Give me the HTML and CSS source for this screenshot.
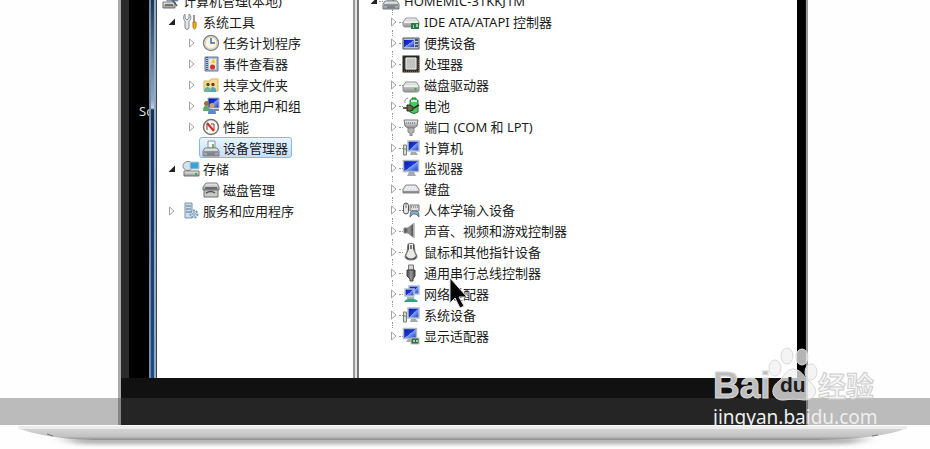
FILE: index.html
```html
<!DOCTYPE html>
<html lang="zh-CN">
<head>
<meta charset="utf-8">
<title>设备管理器</title>
<link rel="stylesheet" href="styles.css">
</head>
<body>
<svg class="sprite" aria-hidden="true">
  <defs>
    <linearGradient id="metal" x2="0" y2="1"><stop stop-color="#f4f4f4"/><stop offset="1" stop-color="#8d9194"/></linearGradient>
    <linearGradient id="blue" x2="1" y2="1"><stop stop-color="#0716a8"/><stop offset=".5" stop-color="#1c38d4"/><stop offset=".52" stop-color="#7fa0f4"/><stop offset="1" stop-color="#1530c8"/></linearGradient>
    <linearGradient id="dark" x2="1"><stop stop-color="#444"/><stop offset=".5" stop-color="#999"/><stop offset="1" stop-color="#444"/></linearGradient>
  </defs>
  <symbol id="closed" viewBox="0 0 8 10"><path d="M1.5 1v8L6 5z" fill="#fff" stroke="#a3a3a3"/></symbol>
  <symbol id="open" viewBox="0 0 8 10"><path d="M7 1.5v6.500H.5z" fill="#222"/></symbol>
  <symbol id="manage" viewBox="0 0 18 18"><path d="M5 1h11v8H5z" fill="url(#blue)" stroke="#9aa4ae"/><path d="M1 10h12v6H1z" fill="url(#metal)" stroke="#777"/><path d="M3 13h8M9 6l6 8" stroke="#555" stroke-width="1.500"/></symbol>
  <symbol id="tools" viewBox="0 0 18 18"><path d="M3 1v4l2 2 2-2V1c3 2 2 6 0 7v7q-2 3-4 0V8C1 6 1 3 3 1z" fill="#e5e8ea" stroke="#858b90"/><path d="M12 2v7" stroke="#777" stroke-width="1.500"/><path d="M11 9h3v5q-1.500 4-3 0z" fill="#f2b21d" stroke="#b8790b"/></symbol>
  <symbol id="clock" viewBox="0 0 18 18"><circle cx="9" cy="9" r="7.500" fill="#fbf4df" stroke="#8a8786" stroke-width="1.500"/><circle cx="9" cy="9" r="6" fill="none" stroke="#d2cec6"/><path d="M9 4v5h4" fill="none" stroke="#4169a8" stroke-width="1.500"/></symbol>
  <symbol id="events" viewBox="0 0 18 18"><path d="M3 2h13v14H3z" fill="#a9c1dc" stroke="#64758b"/><path d="M5 2v14" stroke="#4c5c78" stroke-width="2" stroke-dasharray="1 1"/><path d="M7 4h7v10H7z" fill="#f1ead0"/><path d="M12 3l-3 5h4z" fill="#f5c724"/><circle cx="10.500" cy="12" r="2.500" fill="#d62f25"/></symbol>
  <symbol id="folder" viewBox="0 0 18 18"><path d="M2 5h6l1-2h7v12H2z" fill="#f6dc92" stroke="#d9b25c"/><circle cx="6" cy="8.500" r="1.700" fill="#58472f"/><circle cx="11" cy="8.500" r="1.700" fill="#58472f"/><path d="M2 16q0-5 4-5 3 1 2 5z" fill="#65b6a1"/><path d="M8 16q0-5 3-5 4 1 3 5z" fill="#5aa5be"/></symbol>
  <symbol id="users" viewBox="0 0 18 18"><path d="M6 1h11v10H6z" fill="url(#blue)" stroke="#a9b2bc"/><path d="M12 13h5" stroke="#888" stroke-width="2"/><circle cx="4.500" cy="6.500" r="2.500" fill="#907149"/><circle cx="10" cy="8.500" r="2.500" fill="#d0a172"/><path d="M1 14q0-6 4-5 3 1 3 5z" fill="#5fa96a"/><path d="M6 17q0-6 4-5 4 0 4 5z" fill="#5c89c5"/></symbol>
  <symbol id="perf" viewBox="0 0 18 18"><circle cx="9" cy="9" r="7.500" fill="#f8f8f3" stroke="#77736f" stroke-width="1.500"/><path d="M5 12V6M12 12V6h-3" fill="none" stroke="#7b413c"/><path d="M5 5l7 8" stroke="#d42a22" stroke-width="2"/></symbol>
  <symbol id="device" viewBox="0 0 18 18"><path d="M6 2h7v7H6z" fill="#f8faf7" stroke="#8b9594"/><path d="M11 5v5" stroke="#4a9a4f" stroke-width="1.500"/><path d="M3 9h12l2 3v5H1v-5z" fill="url(#metal)" stroke="#767d84"/><path d="M2 13h14M5 15h8" stroke="#565e65"/></symbol>
  <symbol id="storage" viewBox="0 0 18 18"><ellipse cx="6" cy="6" rx="5" ry="4.500" fill="#d9e2e8" stroke="#7f8c93"/><path d="M8 2h9v7H8z" fill="#38a4d8" stroke="#c3ccd2"/><path d="M2 11h15v5H2z" fill="url(#metal)" stroke="#757575"/><circle cx="14" cy="14" r="1.200" fill="#31b834"/></symbol>
  <symbol id="diskman" viewBox="0 0 18 18"><path d="M4 2h11l2 4v3H1V6z" fill="url(#metal)" stroke="#7b7b7b"/><path d="M2 9h14v7H2z" fill="#c7c9c9" stroke="#6f6f6f"/><path d="M3 7h12M4 12q5-3 9 0" fill="none" stroke="#555" stroke-width="1.500"/></symbol>
  <symbol id="services" viewBox="0 0 18 18"><path d="M3 1h7v15H3z" fill="#c9dcea" stroke="#8194a3"/><path d="M4 4h5M4 7h5M4 10h5" stroke="#587990"/><circle cx="12" cy="12" r="3.500" fill="#d4e4f0" stroke="#779bb8" stroke-width="2" stroke-dasharray="2 1"/><circle cx="12" cy="12" r="1.300" fill="#fff" stroke="#7794aa"/></symbol>
  <symbol id="ide" viewBox="0 0 18 18"><path d="M4 5h10l3 4v3q0 2-2 2H3q-2 0-2-2V9z" fill="url(#metal)" stroke="#999"/><path d="M2 9h14" stroke="#eee" stroke-width="2"/><path d="M9 10h8v6H9z" fill="#287a4c"/><path d="M11 12h1v3h-1zM14 11h2v3h-2z" fill="#9ccba2"/></symbol>
  <symbol id="portable" viewBox="0 0 18 18"><path d="M1 4h16v11H1z" fill="#b9bfcc" stroke="#505568"/><path d="M2 6h10v7H2z" fill="url(#blue)"/><path d="M13 6h3M13 9h3M13 12h3" stroke="#27335a" stroke-width="1.500"/></symbol>
  <symbol id="cpu" viewBox="0 0 18 18"><path d="M1.500 1.500h15v15h-15z" fill="#494949" stroke="#292522" stroke-width="2"/><path d="M4 3h10v11H4z" fill="#c2c2c0" stroke="#eee"/><path d="M2 17h15V4" fill="none" stroke="#b59450" stroke-dasharray="1 1"/></symbol>
  <symbol id="disk" viewBox="0 0 18 18"><path d="M4 6h10l3 4v4q0 2-2 2H3q-2 0-2-2v-4z" fill="url(#metal)" stroke="#8c8c8c"/><path d="M2 10h14" stroke="#eee" stroke-width="2"/><circle cx="13.500" cy="13" r="1.200" fill="#4aa736"/></symbol>
  <symbol id="battery" viewBox="0 0 18 18"><path d="M8 3h2V1h4v2h2v12q-4 3-8 0z" fill="#43cb5b" stroke="#28713a"/><path d="M9 4h6" stroke="#d8e7db" stroke-width="2"/><path d="M3 6q-1-4 3-5" fill="none" stroke="#8791a2"/><path d="M1 11h4M9 11h3l5-3" fill="none" stroke="#292b22" stroke-width="1.500"/><path d="M5 8h3l3 2v3l-3 1H5z" fill="#6b6648" stroke="#292b22"/></symbol>
  <symbol id="port" viewBox="0 0 18 18"><path d="M2 2h14l-1 6-3 2H6L3 8z" fill="url(#metal)" stroke="#777"/><path d="M4 5h10" stroke="#555" stroke-dasharray="1 1"/><path d="M6 10h6v4l-2 1v3H8v-3l-2-1z" fill="#b1b5b7" stroke="#858585"/></symbol>
  <symbol id="computer" viewBox="0 0 18 18"><path d="M1.500 6h3v10h-3z" fill="#dadad0" stroke="#7c7f7b"/><path d="M2 10h2" stroke="#39a945"/><path d="M6 2h11v10H6z" fill="url(#blue)" stroke="#b4bdca" stroke-width="1.500"/><path d="M9 13h5l2 3H8z" fill="#a4a9ad"/></symbol>
  <symbol id="monitor" viewBox="0 0 18 18"><path d="M1.500 1.500h15v11h-15z" fill="url(#blue)" stroke="#acb4c1" stroke-width="1.500"/><path d="M7 13h5l2 4H5z" fill="#a0a8b0"/></symbol>
  <symbol id="keyboard" viewBox="0 0 18 18"><path d="M4 5h10l3 4v4H1V9z" fill="#dcdee2" stroke="#888"/><path d="M4 7h10M3 9h12" stroke="#fff" stroke-dasharray="2 1"/><path d="M1 12h16" stroke="#767b87" stroke-width="1.500"/></symbol>
  <symbol id="hid" viewBox="0 0 18 18"><rect x="1.500" y="2" width="5" height="11" rx="2.500" fill="#e5e5e3" stroke="#555"/><path d="M4 2v5M8 4h9v6H8z" fill="#ddd" stroke="#777"/><path d="M9 6h7" stroke="#555" stroke-dasharray="1 1"/><path d="M8 16q0-6 2-6h5q2 0 2 6l-3-3h-3z" fill="#86b0c8" stroke="#59717e"/></symbol>
  <symbol id="sound" viewBox="0 0 18 18"><path d="M2 6h4l6-5v15l-6-5H2z" fill="url(#dark)" stroke="#888"/><path d="M12 1v15" stroke="#c3c3c3" stroke-width="1.500"/></symbol>
  <symbol id="mouse" viewBox="0 0 18 18"><path d="M6 1q3-1 6 0l1 8 2 4q0 4-6 4t-6-4l2-4z" fill="#4f4f4f" stroke="#777"/><path d="M7 1h4v5l3 7q-5 5-10 0l3-7z" fill="#e9e9e7"/><path d="M9 2v4" stroke="#555" stroke-width="1.500"/></symbol>
  <symbol id="usb" viewBox="0 0 18 18"><path d="M6.500 1h5v5h-5z" fill="#d4d4d4" stroke="#777"/><path d="M5 6h8v6l-2 3v2H8v-2l-3-3z" fill="url(#dark)" stroke="#444"/></symbol>
  <symbol id="network" viewBox="0 0 18 18"><path d="M7 1h10v8H7z" fill="url(#blue)" stroke="#b0bfd6" stroke-width="1.500"/><path d="M3 4h9v7H3z" fill="url(#blue)" stroke="#b0bfd6" stroke-width="1.500"/><path d="M5 13h7" stroke="#9cb4b0" stroke-width="2"/><path d="M2 17q1-3 5-3h4q4 0 5 3z" fill="#33a57a"/></symbol>
  <symbol id="display" viewBox="0 0 18 18"><path d="M1.500 1.500h13v10h-13z" fill="url(#blue)" stroke="#b0b9c4" stroke-width="1.500"/><path d="M6 12h5l1 3H4z" fill="#aaa"/><path d="M9 11h8v6H9z" fill="#326b4c" stroke="#bac7ba"/><path d="M11 13h2v2h-2zM14 13h2v2h-2z" fill="#a8d1a2"/></symbol>
</svg>

<main class="laptop">
  <div class="lid">
    <div class="screen">
      <div class="desktop">Sc</div>
      <section class="window">
        <ul class="tree nav">
          <li><svg class="arrow"></svg><svg class="icon"><use href="#manage"/></svg><span>计算机管理(本地)</span></li>
          <li class="l1"><svg class="arrow"><use href="#open"/></svg><svg class="icon"><use href="#tools"/></svg><span>系统工具</span></li>
          <li class="l2"><svg class="arrow"><use href="#closed"/></svg><svg class="icon"><use href="#clock"/></svg><span>任务计划程序</span></li>
          <li class="l2"><svg class="arrow"><use href="#closed"/></svg><svg class="icon"><use href="#events"/></svg><span>事件查看器</span></li>
          <li class="l2"><svg class="arrow"><use href="#closed"/></svg><svg class="icon"><use href="#folder"/></svg><span>共享文件夹</span></li>
          <li class="l2"><svg class="arrow"><use href="#closed"/></svg><svg class="icon"><use href="#users"/></svg><span>本地用户和组</span></li>
          <li class="l2"><svg class="arrow"><use href="#closed"/></svg><svg class="icon"><use href="#perf"/></svg><span>性能</span></li>
          <li class="l2 selected"><svg class="icon"><use href="#device"/></svg><span>设备管理器</span></li>
          <li class="l1"><svg class="arrow"><use href="#open"/></svg><svg class="icon"><use href="#storage"/></svg><span>存储</span></li>
          <li class="l2"><svg class="arrow"></svg><svg class="icon"><use href="#diskman"/></svg><span>磁盘管理</span></li>
          <li class="l1"><svg class="arrow"><use href="#closed"/></svg><svg class="icon"><use href="#services"/></svg><span>服务和应用程序</span></li>
        </ul>
        <div class="splitter"></div>
        <ul class="tree devices">
          <li class="root"><svg class="arrow"><use href="#open"/></svg><svg class="icon"><use href="#device"/></svg><span>HOMEMIC-31KKJ1M</span></li>
          <li><svg class="arrow"><use href="#closed"/></svg><svg class="icon"><use href="#ide"/></svg><span>IDE ATA/ATAPI 控制器</span></li>
          <li><svg class="arrow"><use href="#closed"/></svg><svg class="icon"><use href="#portable"/></svg><span>便携设备</span></li>
          <li><svg class="arrow"><use href="#closed"/></svg><svg class="icon"><use href="#cpu"/></svg><span>处理器</span></li>
          <li><svg class="arrow"><use href="#closed"/></svg><svg class="icon"><use href="#disk"/></svg><span>磁盘驱动器</span></li>
          <li><svg class="arrow"><use href="#closed"/></svg><svg class="icon"><use href="#battery"/></svg><span>电池</span></li>
          <li><svg class="arrow"><use href="#closed"/></svg><svg class="icon"><use href="#port"/></svg><span>端口 (COM 和 LPT)</span></li>
          <li><svg class="arrow"><use href="#closed"/></svg><svg class="icon"><use href="#computer"/></svg><span>计算机</span></li>
          <li><svg class="arrow"><use href="#closed"/></svg><svg class="icon"><use href="#monitor"/></svg><span>监视器</span></li>
          <li><svg class="arrow"><use href="#closed"/></svg><svg class="icon"><use href="#keyboard"/></svg><span>键盘</span></li>
          <li><svg class="arrow"><use href="#closed"/></svg><svg class="icon"><use href="#hid"/></svg><span>人体学输入设备</span></li>
          <li><svg class="arrow"><use href="#closed"/></svg><svg class="icon"><use href="#sound"/></svg><span>声音、视频和游戏控制器</span></li>
          <li><svg class="arrow"><use href="#closed"/></svg><svg class="icon"><use href="#mouse"/></svg><span>鼠标和其他指针设备</span></li>
          <li><svg class="arrow"><use href="#closed"/></svg><svg class="icon"><use href="#usb"/></svg><span>通用串行总线控制器</span></li>
          <li><svg class="arrow"><use href="#closed"/></svg><svg class="icon"><use href="#network"/></svg><span class="hovered">网络适配器<svg class="cursor" viewBox="0 0 20 32"><path d="M2 1v25l5-5 5 10 4-2-5-9h8z"/></svg></span></li>
          <li><svg class="arrow"><use href="#closed"/></svg><svg class="icon"><use href="#computer"/></svg><span>系统设备</span></li>
          <li><svg class="arrow"><use href="#closed"/></svg><svg class="icon"><use href="#display"/></svg><span>显示适配器</span></li>
        </ul>
      </section>
    </div>
  </div>
  <svg class="base" viewBox="0 0 930 24" preserveAspectRatio="none">
    <defs>
      <linearGradient id="body" x2="0" y2="1"><stop stop-color="#d6d6d6"/><stop offset=".7" stop-color="#c2c2c2"/><stop offset="1" stop-color="#8c8c8c"/></linearGradient>
      <filter id="soft" x="-5%" y="-100%" width="110%" height="300%"><feGaussianBlur stdDeviation="8 2"/></filter>
    </defs>
    <path d="M60 13h810l-20 6H80z" fill="#aaa" filter="url(#soft)"/>
    <path d="M18 3h889q-25 11-90 12H95Q45 14 18 3z" fill="url(#body)"/>
    <path d="M18 1h889v3H20z" fill="#ececec"/>
    <path d="M47 9l6 2M878 10l-6 1" stroke="#777"/>
  </svg>
</main>
<div class="band"></div>
<div class="watermark">
  <div class="brand">
    <span class="bai">Bai</span>
    <span class="paw"><svg viewBox="0 0 52 56"><ellipse cx="7" cy="22" rx="6" ry="8"/><ellipse cx="19" cy="10" rx="6" ry="8"/><ellipse cx="34" cy="11" rx="6" ry="8"/><ellipse cx="43" cy="26" rx="6" ry="8"/><path d="M25 23c-7 0-9 8-14 12-11 8-6 20 5 19 7-1 13-1 20 0 13 0 15-12 6-18-6-5-9-13-17-13z"/></svg><b>du</b></span>
    <span class="jy">经验</span>
  </div>
  <div class="site">jingyan.baidu.com</div>
</div>
</body>
</html>
```

FILE: styles.css
```css
* { box-sizing: border-box; }
body {
  margin: 0;
  min-height: 100vh;
  position: relative;
  overflow: hidden;
  background: #fefefe;
  color: #1c1c1c;
  font: 13px/20px "Noto Sans", "Noto Sans CJK SC", sans-serif;
}
.sprite { position: absolute; width: 0; height: 0; }
.laptop { min-height: 100vh; display: flex; flex-direction: column; }
.lid {
  flex: 1;
  display: flex;
  margin: 0 122px 0 118px;
  padding: 0 1px 47px 8px;
  background: linear-gradient(90deg, #2b2b2b 8px, #111 8px) no-repeat 0 0 / 100% 378px #111;
  border-left: 3px solid #aaa;
  border-right: 2px solid #999;
}
.screen { flex: 1; display: flex; min-width: 0; padding-right: 8px; background: #000; }
.desktop {
  width: 20px;
  padding: 101px 0 0 10px;
  overflow: hidden;
  color: #ddd;
}
.window {
  flex: 1;
  display: flex;
  min-width: 0;
  padding-left: 8px;
  background:
    linear-gradient(90deg, #6f8cab 0 2px, transparent 2px 5px, #8faac4 5px 7px, #444 7px) no-repeat 0 0 / 8px 100%,
    linear-gradient(#1d3552 0, #8fa9c4 100px, #c4d3e2 108px, #14305a 110px, #1d4a86) no-repeat 0 0 / 8px 100%,
    #fff;
}
.tree {
  display: grid;
  grid-auto-rows: 1fr;
  margin: -9px 0 0;
  padding: 0;
  list-style: none;
  white-space: nowrap;
}
.tree li { display: flex; align-items: center; min-height: 0; }
.arrow { width: 8px; height: 10px; flex: none; }
.icon { width: 18px; height: 18px; flex: none; }
.nav { width: 197px; height: 230px; padding-left: 5px; }
.nav li { gap: 3px; }
.nav .arrow + .icon { margin-left: 3px; }
.nav li:first-child .arrow { width: 0; }
.nav li:first-child .icon { margin-left: -3px; }
.nav .l1 { padding-left: 6px; }
.nav .l2 { padding-left: 26px; }
.nav .selected {
  justify-self: start;
  margin-left: 37px;
  padding: 0 3px 0 2px;
  background: linear-gradient(#eaf4fe, #c5dffa);
  border: 1px solid #8ab8e6;
  border-radius: 3px;
}
.splitter {
  width: 6px;
  margin-left: -1px;
  background: #e4e4e4;
  border-left: 2px solid #999;
  border-right: 2px solid #777;
}
.devices { flex: 1; height: 355px; padding-left: 31px; }
.devices li { gap: 4px; position: relative; }
.devices .root { margin-left: -20px; }
.devices li::before { content: ""; position: absolute; left: 2px; top: -3px; height: 6px; border-left: 1px dotted #999; }
.devices li::after { content: ""; position: absolute; left: 9px; top: 50%; width: 4px; border-top: 1px dotted #999; }
.devices .root::before { display: none; }
.hovered { position: relative; }
.cursor { position: absolute; left: 24px; top: -7px; width: 20px; height: 32px; fill: #050505; stroke: #ddd; }
.base { display: block; width: 100%; height: 24px; }
.band { position: absolute; left: 0; right: 0; bottom: 24px; height: 27px; background: rgba(74, 74, 74, .37); }
.watermark { position: absolute; right: 50px; bottom: 20px; width: 167px; }
.brand { display: flex; align-items: flex-end; height: 57px; padding-bottom: 3px; }
.bai {
  width: 55px;
  color: #bdbdbd;
  font: bold 37px/32px "Liberation Sans", sans-serif;
  -webkit-text-stroke: 1px #d8d8d8;
}
.paw { position: relative; width: 50px; height: 56px; }
.paw svg { width: 52px; height: 56px; fill: rgba(240, 240, 240, .75); stroke: #dadada; }
.paw b { position: absolute; left: 12px; top: 28px; color: #1c1c1c; font: bold 21px/22px "Liberation Sans", sans-serif; }
.jy {
  color: #f4f4f4;
  font: bold 28px/33px "Noto Sans CJK SC", sans-serif;
  -webkit-text-stroke: 1px #cecece;
}
.site { font: 19px/24px "Noto Sans", sans-serif; color: #eee; }
```
